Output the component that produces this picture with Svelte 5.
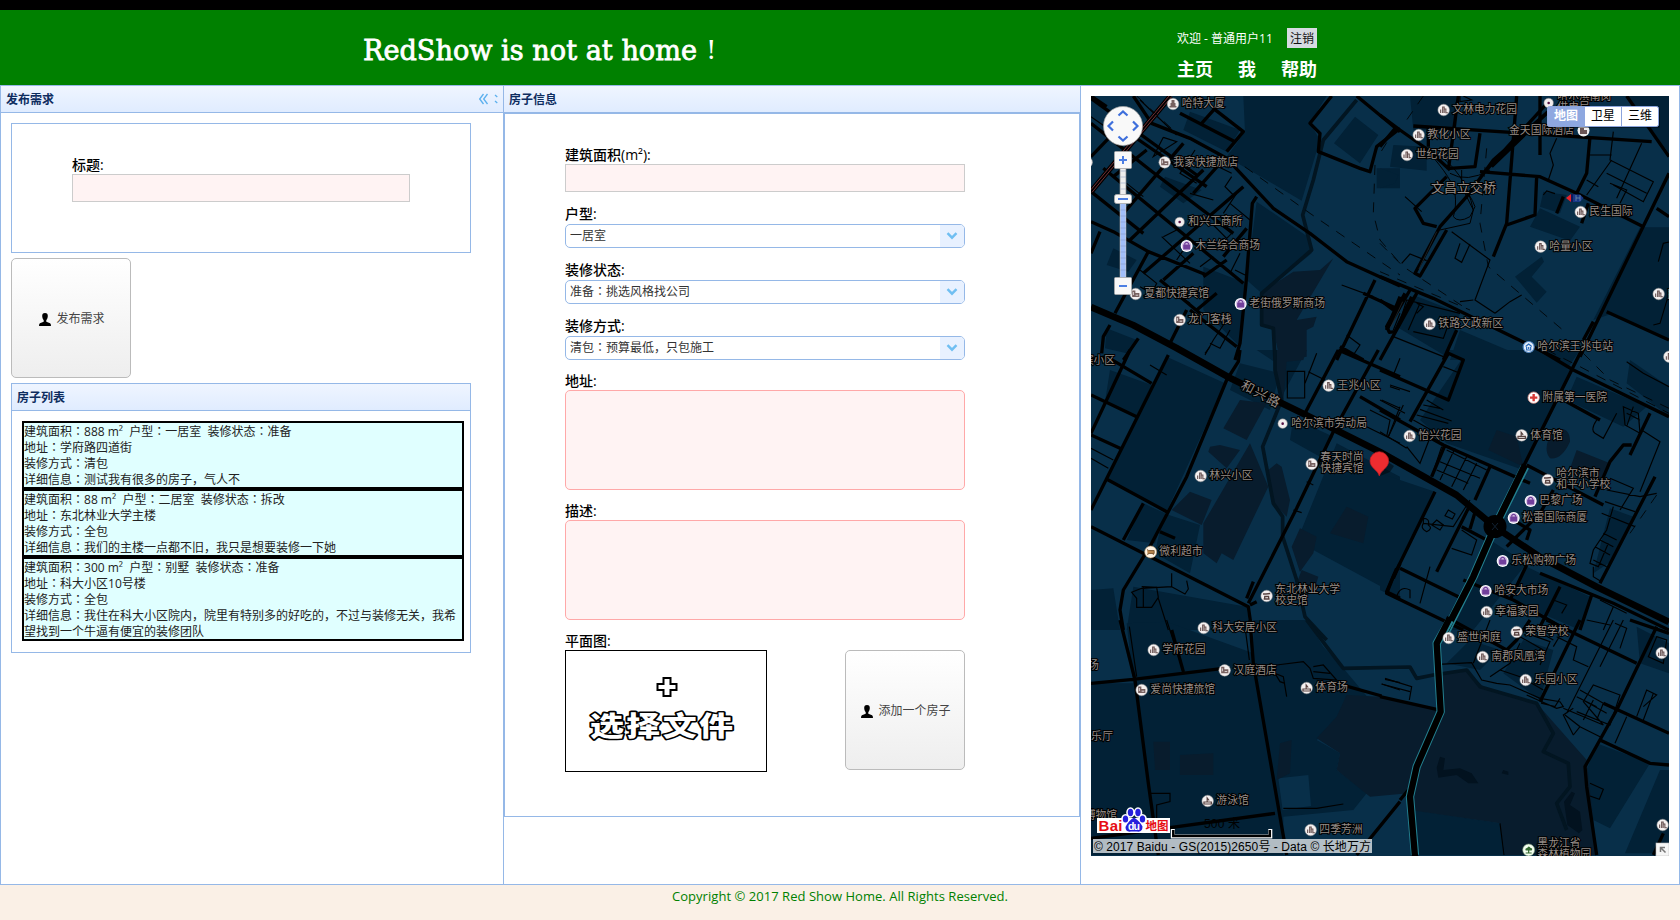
<script>
  const houses = [
    { area: '888', type: '一居室', state: '准备', address: '学府路四道街', way: '清包', detail: '测试我有很多的房子，气人不' },
    { area: '88', type: '二居室', state: '拆改', address: '东北林业大学主楼', way: '全包', detail: '我们的主楼一点都不旧，我只是想要装修一下她' },
    { area: '300', type: '别墅', state: '准备', address: '科大小区10号楼', way: '全包', detail: '我住在科大小区院内，院里有特别多的好吃的，不过与装修无关，我希望找到一个牛逼有便宜的装修团队' }
  ];
  const combos = [
    { label: '户型:', value: '一居室' },
    { label: '装修状态:', value: '准备：挑选风格找公司' },
    { label: '装修方式:', value: '清包：预算最低，只包施工' }
  ];
  const pieces = (s) => s.split(/(：)/).filter(Boolean);

  // Tile origins; geometry inside a tile is in thirds of a pixel.
  const tiles = {
    a: [1080, 80], b: [1380, 80], c: [1080, 350],
    d: [1380, 350], e: [1080, 620], f: [1380, 620]
  };
  const raw = [
    ['a', 279, 72, 'tower', '哈特大厦'], ['a', 254, 247, 'hotel', '我家快捷旅店'],
    ['a', 299, 426, 'dot', '和兴工商所'], ['a', 320, 498, 'bag', '木兰综合商场'],
    ['a', 167, 642, 'hotel', '夏都快捷宾馆'], ['a', 482, 672, 'bag', '老街俄罗斯商场'],
    ['a', 299, 720, 'hotel', '龙门客栈'], ['a', 20, 247, 'home', ''],
    ['b', 191, 90, 'home', '文林电力花园'], ['b', 116, 165, 'home', '教化小区'],
    ['b', 81, 225, 'home', '世纪花园'], ['b', 602, 396, 'home', '民生国际'],
    ['b', 482, 500, 'home', '哈量小区'], ['b', 149, 732, 'home', '铁路文政新区'],
    ['b', 446, 801, 'metro', '哈尔滨王兆屯站'], ['b', 836, 642, 'home', ''],
    ['b', 868, 830, 'home', ''], ['b', 506, 69, 'dot', '哈尔滨南岗', '供电局'],
    ['c', 746, 107, 'home', '王兆小区'], ['c', 608, 221, 'dot', '哈尔滨市劳动局'],
    ['c', 695, 342, 'hotel', '春天时尚', '快捷宾馆'], ['c', 362, 378, 'home', '林兴小区'],
    ['c', 212, 606, 'market', '微利超市'], ['c', 560, 738, 'school', '东北林业大学', '校史馆'],
    ['d', 461, 143, 'cross', '附属第一医院'], ['d', 89, 258, 'home', '怡兴花园'],
    ['d', 425, 256, 'sport', '体育馆'], ['d', 503, 390, 'school', '哈尔滨市', '和平小学校'],
    ['d', 452, 453, 'bag', '巴黎广场'], ['d', 401, 504, 'bag', '松雷国际商厦'],
    ['d', 368, 633, 'bag', '乐松购物广场'], ['d', 317, 723, 'bag', '哈安大市场'],
    ['d', 320, 786, 'home', '幸福家园'],
    ['e', 371, 24, 'home', '科大安居小区'], ['e', 221, 90, 'home', '学府花园'],
    ['e', 434, 151, 'hotel', '汉庭酒店'], ['e', 185, 210, 'hotel', '爱尚快捷旅馆'],
    ['e', 680, 204, 'sport', '体育场'], ['e', 383, 543, 'sport', '游泳馆'],
    ['e', 692, 630, 'home', '四季芳洲'],
    ['f', 206, 54, 'home', '盛世闲庭'], ['f', 410, 36, 'school', '荣智学校'],
    ['f', 308, 111, 'home', '南郡凤凰湾'], ['f', 437, 180, 'home', '乐园小区'],
    ['f', 845, 99, 'home', ''], ['f', 848, 615, 'home', ''],
    ['f', 446, 690, 'park', '黑龙江省', '森林植物园']
  ];
  const pois = raw.map(([t, x, y, icon, ...lines]) => ({
    x: tiles[t][0] + x / 3, y: tiles[t][1] + y / 3, icon, lines: lines.filter(Boolean)
  }));
  const at = (t) => `translate(${tiles[t][0]} ${tiles[t][1]}) scale(.33333)`;
</script>

{#snippet person()}
  <svg width="12" height="13" viewBox="0 0 12 13" fill="#000"><path d="M6 0C3.900 0 3.200 1.300 3.200 3c0 1.900.8 3.300 1.500 4.100V8.700L.9 10.200Q0 10.600 0 13H12q0-2.400-.9-2.800L7.300 8.700V7.100C8 6.300 8.800 4.900 8.800 3 8.800 1.300 8.100 0 6 0z" /></svg>
{/snippet}
{#snippet cn(s)}{#each pieces(s) as p}{#if p === '：'}<span class="mid-punct" lang="zh-Hant">{p}</span>{:else}{p}{/if}{/each}{/snippet}

<div class="page">
  <header>
    <svg class="brand" width="356" height="36" viewBox="0 0 356 36"><text x="0" y="29" textLength="334" lengthAdjust="spacingAndGlyphs">RedShow is not at home</text><text x="343" y="28" class="bang">!</text></svg>
    <div class="user">
      <div class="welcome"><span>欢迎 - 普通用户11</span><button class="logout">注销</button></div>
      <nav><b>主页</b><b>我</b><b>帮助</b></nav>
    </div>
  </header>

  <main>
    <section class="left">
      <div class="bar"><b>发布需求</b>
        <svg width="22" height="12" viewBox="0 0 22 12" fill="none" stroke="#5cb0ee" stroke-width="1.300"><path d="M4.500 1L.7 6l3.800 5M8.500 1L4.700 6l3.800 5" /><path d="M16 2l2.300 2M16 8l2.300 2" /></svg>
      </div>
      <div class="leftbody">
        <div class="titlebox">
          <div class="label">标题:</div>
          <div class="input"></div>
        </div>
        <button class="big">{@render person()}<span>发布需求</span></button>
        <div class="listpanel">
          <div class="bar"><b>房子列表</b></div>
          <div class="list">
            {#each houses as h}
              <div class="house">
                <div>{@render cn(`建筑面积：${h.area} m²\u00a0 户型：${h.type}\u00a0 装修状态：${h.state}`)}</div>
                <div>{@render cn(`地址：${h.address}`)}</div>
                <div>{@render cn(`装修方式：${h.way}`)}</div>
                <div>{@render cn(`详细信息：${h.detail}`)}</div>
              </div>
            {/each}
          </div>
        </div>
      </div>
    </section>

    <section class="mid">
      <div class="bar"><b>房子信息</b></div>
      <div class="form">
        <div class="label">建筑面积(m²):</div>
        <div class="input"></div>
        {#each combos as c}
          <div class="label gap combo-label">{c.label}</div>
          <div class="combo"><span>{@render cn(c.value)}</span><em><svg width="12" height="8" viewBox="0 0 12 8" fill="none" stroke="#70bff2" stroke-width="2.400"><path d="M1.500 1.200L6 5.700l4.500-4.500" /></svg></em></div>
        {/each}
        <div class="label gap last">地址:</div>
        <div class="area"></div>
        <div class="label gap area-label">描述:</div>
        <div class="area"></div>
        <div class="label gap area-label">平面图:</div>
        <div class="files">
          <div class="file">
            <svg width="200" height="120" viewBox="0 0 200 120">
              <path d="M97.500 27h7v6h6v6h-6v6h-7v-6h-6v-6h6z" fill="#fff" stroke="#000" stroke-width="2" />
              <g transform="translate(24 84.500) scale(1 .8)"><text x="0" y="0" textLength="143">选择文件</text></g>
            </svg>
          </div>
          <button class="big">{@render person()}<span>添加一个房子</span></button>
        </div>
      </div>
    </section>

    <section class="right">
      <svg class="map" width="578" height="760" viewBox="1091 96 578 760">
        <rect x="1091" y="96" width="578" height="760" fill="#082f49" />
        <!-- land blocks -->
        <g fill="#022136">
          <g transform={at('a')}>
            <path d="M330 95L480 150 440 215 310 150zM490 48H740L690 130 720 180 665 362 440 230 495 155zM255 290L365 330 310 370 240 320zM370 560L500 610 480 800 370 690zM530 365L690 475 695 520 545 640 500 600zM825 110L895 165 840 250 762 190zM100 505L170 540 145 575 80 555zM80 745L170 780 140 820 75 805zM890 265H960V325H890z" />
          </g>
          <g transform={at('b')}>
            <path d="M90 48H230V150H100zM0 265L55 285 45 310 0 325zM40 195L140 200V272L30 260zM480 385L600 440 570 482 450 440zM490 335L560 345 540 400 480 380zM485 530L405 590 470 668 500 635 455 590 492 545zM780 442H867V780L700 700 640 720zM100 645L240 700 200 830 50 740zM240 750L430 830 400 840H210zM740 48H867V220z" />
          </g>
          <g transform={at('c')}>
            <path d="M260 20L435 100 260 485 80 390zM530 0H680L600 150 590 40zM480 40L600 70 570 180 450 120zM640 205L760 260 720 320 630 270zM770 280L960 380V740L700 600 660 665 640 600zM250 490L360 525 330 670 225 610zM33 720L100 715 120 840H33zM160 710L500 770 510 840H140zM190 460L255 490 225 580 140 570zM90 60L215 105 170 200 75 155z" />
          </g>
          <g transform={at('d')}>
            <path d="M250 20L580 60 430 360 200 280 120 210zM190 0H600L560 60 260 30zM590 80L800 170 730 230 560 150zM0 370L165 425 30 700 20 730 0 720zM330 570L440 640 280 840H210L285 690zM440 650L630 740 600 840 390 750zM690 475L760 500 700 630 640 670zM750 30L867 110V200L740 100z" />
          </g>
          <g transform={at('e')}>
            <path d="M140 10L260 5 520 100 520 0H680L730 80 790 145 870 240 710 360 780 400 770 450 860 520 820 570 610 590V705H33V190H160zM550 140L730 110 800 230 710 360 770 450 590 475z" />
          </g>
          <g transform={at('f')}>
            <path d="M100 570L360 610 375 705H110zM650 370L810 430 690 625 640 600 620 450zM840 450H867V700H735zM430 60L520 90 480 240 370 160zM270 60L360 90 300 150 200 130zM770 20L867 70V160L780 130z" />
          </g>
        </g>
        <path transform={at('e')} d="M595 475L685 465 693 558 608 570z" fill="#082f49" />
        <g fill="#081c2d">
          <path transform={at('a')} d="M540 640L640 575 720 570 760 535 650 720 710 710 700 740 680 750V830L600 840 580 750 540 735z" />
          <path transform={at('c')} d="M480 150L560 160 500 270 430 235zM390 290L420 285 480 300 440 355 385 305zM510 280L565 410 460 630 425 610 410 640 370 610V520zM330 425L395 450 365 525 275 480zM590 340L605 350 630 450 620 500 580 460 565 360zM660 535L710 560 700 610 660 665 635 590zM590 0H680L670 30 620 35 610 150 585 60zM665 660L715 680 700 730 650 700zM800 470L865 500 850 580 750 550z" />
          <path transform={at('d')} d="M520 240Q570 225 570 275 545 330 510 325 485 295 520 240zM590 300L690 340 660 400 565 370zM350 240L410 260 430 350 325 300z" />
          <path transform={at('e')} d="M800 225L900 230 1075 272 1010 440 985 520 870 530 770 450 780 400 710 355 770 290zM300 405L400 400V465H300zM220 365H270V450H225zM600 370L635 360 630 460 590 480z" />
          <path transform={at('f')} d="M180 160L260 150 310 200 470 250 620 420 640 600 650 705H375L360 610 90 570 110 440 182 275z" />
        </g>
        <g fill="#02121f">
          <path transform={at('f')} d="M180 410l15 5-5 35 50-5 35 15 20 30-30 0-35-25-55 8-5-30zM370 450l15 5v10l-20-5zM575 515l10 5-15 35 30 20 7 55-10 10-35-25-10-70z" />
        </g>
        <!-- rivers -->
        <g fill="none" stroke="#021521" stroke-width="11" stroke-linejoin="round">
          <path transform={at('a')} d="M830 60L730 180 700 300 668 405 695 510 545 640V735L580 745 585 840" />
          <path transform={at('c')} d="M585 0V60L605 150 548 290 580 460 608 500V560L650 690 675 800 740 870" />
          <path transform={at('e')} d="M680 0L740 80 790 145 990 141 1010 175 1060 165 1160 150 1200 200 1370 250 1420 340 1390 395 1465 430 1470 500 1430 550 1460 630" />
        </g>
        <!-- minor streets -->
        <g class="thin">
          <path transform={at('a')} d="M250 172L220 230 290 185 250 172M345 210L300 280 350 310M455 290L435 320 460 345M450 370L510 420M470 340L430 400M420 430L455 460 440 475 400 435M245 470L330 550M330 480L290 540M360 560L400 530M180 570L230 610 215 640 180 620M270 630L330 670M440 720L400 780 375 825M390 790l30 15 30-55M465 570l30 15M785 615L880 650M800 765L840 795 820 825 780 805M940 750L960 700M180 60L290 165M33 110L90 150M140 310L190 350M330 340L400 360M480 520L450 580M250 470l40-20M415 260l40 20" />
          <path transform={at('b')} d="M250 48l25 12-35 5V48M530 175L510 220 520 255 505 300M700 155l-10 85 130 65-30 60-90-50M695 240L620 345M630 225H695M785 190L710 355M680 280L800 340M720 370L740 330 690 310M620 300L655 320M75 350L125 395M215 455L330 540 285 660 345 700M240 490l-15 45 20 12 25-55M65 550l25-28 50 20M55 740L80 660 240 700M85 750L120 670M110 670l20 10-20 20M40 770L190 830M100 755l90 20 20-55M835 545l15-55 17-4M820 735l20-5 27-90M280 660l-40 5M490 345l10-12 25 8M345 700l45-35 35-20" />
          <path transform={at('c')} d="M375 10l15-20M622 64h52v80h-52zM710 10L675 100M685 65L735 90M33 295L100 330M33 325L85 355M210 45l50 30M905 150l55 25M930 110l30 10M870 180l60 30-10 50M860 230l100 50M640 480l25 8M680 395l20 10M275 670v40l-90 5-30 12 15 18v27h45l20-30-5-30-45-2M190 712v60M275 710l40 22 10-15-5-25M235 745l30 95M960 170L925 260" />
          <path transform={at('d')} d="M60 25L40 75M190 50L240 70M0 150L75 190M30 105l60 20M100 210l90 50M110 195l95 25M120 178l95 35M130 165l50 10M140 150l50 30M70 165L25 260M80 290L120 340 155 250M0 245L80 295M185 290l-30 90M225 295L180 390M260 320L215 410M290 340L250 420M180 335l120 50M170 360L265 400M200 300l120 60M270 450L220 530 130 520M245 540l45 30-15 45-60-20M170 510l20 15-10 15-25-15zM205 480l20 12-8 15-22-10zM130 505q20 0 15 20 15 10-5 20-20-10-10-25zM50 740q10-35 40-20L90 745M150 650L120 760M650 210q-20 30-5 40l25 15 40-75M730 170l45 20 5 60-45-25zM740 190l40 20M760 170l-20 60M785 240l55 35-60 150M690 385l70 30-40 65M675 455l90 30M665 490l100 40M700 470l-20 70-40 60-10 40 25 10 30-70M645 590l45 25M660 570l40 20M670 550l40 20M640 630l40 20M640 650v30l20 12M540 710l-20 40 40 15-15 25M680 420L780 440 830 430M740 35L790 70 867 110M700 770L670 840M660 750L740 790" />
          <path transform={at('e')} d="M148 20L170 170M260 0l50 155M495 20L508 120M560 150L610 170 620 230M570 135L600 185 615 190M590 135L670 125 690 145 700 175 770 180 730 135 700 140M700 155L750 160M915 178l45 10M905 192L960 210M610 565l100 0 80-13M210 520H270V545L230 555V600" />
          <path transform={at('f')} d="M15 175L95 200 88 240M5 192L90 215M175 133L275 128 305 180 350 190 390 195 480 235 540 245 550 260 530 265 440 225M360 150l60 20 70 40M280 130L330 0M330 170L390 130 420 70M420 50L490 90M440 40l70 25-30 70M520 60L450 20M530 50l60 30-10 40 45 20M550 265l120 50-60-70 30-50 80 30-30 90-100-40M580 345l-30-60 30-20M590 230l60 30M600 210l70 40-20 50M600 320L660 350M620 0L690 15M705 10l35 15-20 60M660 140L730 0M550 30L520 80M790 260L830 225 800 210 770 290M820 220L790 300M630 490l40 18-12 30-28-10M740 290L705 370M360 610l12 95M830 50l30 10-10 70-45-20zM600 235l80 45M610 300l30-60M490 220l-5 30 40 10 15-25M555 285L600 320 580 345M700 0L560 280" />
        </g>
        <!-- streets -->
        <g class="street">
          <path transform={at('a')} d="M33 55L350 285M33 130L210 270 460 460M33 230L100 160M33 335L190 460M70 265L490 610M100 290L200 210M160 48L215 130 330 175 440 235 580 385 690 460 800 545 960 618M300 100L465 185M365 130L405 85M400 85L490 155 440 215M155 165L380 320M310 190L130 400M370 270L150 480M490 320L190 580M250 600L340 520M33 425L100 455 205 515 380 585M205 515L105 700M60 455L33 520M500 445L430 530M330 690L470 800M440 540L370 590M33 48L80 80M90 735L70 770 65 820M175 775L130 840M420 250L340 340M530 350L517 370 498 610 480 790 465 840M240 600L360 700M410 640L350 690M320 690L270 790M755 48L690 130 720 160 715 215 840 265 870 275 890 200 960 145M830 48L960 155M885 600L770 840M780 800L850 840M850 640L960 690M920 750L960 650" />
          <path transform={at('b')} d="M0 105L60 150 145 210 210 270M0 200L50 140M100 138L815 185M235 48L205 270M300 160L285 260 210 265M410 48L380 430 340 530M145 145L145 200M480 48V225M335 260L510 90M300 275L480 290 590 340 790 440M470 290L465 405 380 435M590 340L620 280 630 170M200 290L105 385 130 430 170 440M625 370L605 430M550 350L530 400M740 48L867 230M867 280L600 830M830 385L867 410M0 590L160 655 540 840M90 630L20 750M110 640L0 840M230 750L190 840M680 695L867 780M0 660L40 690M640 725L610 780" />
          <path transform={at('c')} d="M480 0L475 35 440 90 320 380 215 580 130 720 120 780 130 840M265 15L33 480M33 530L200 615 505 770 515 840M75 385L260 485M190 460L130 570M150 0L33 250M33 30L80 20 215 100M33 135L170 200M33 255L120 295M240 545L285 565M775 0L675 190M775 0L960 80M895 0L760 245 650 475 505 760M840 140L960 210M520 695L500 745M530 755L510 765M960 640L940 685M950 655L920 725 960 745" />
          <path transform={at('d')} d="M0 60L205 150 250 30 205 10 90 215M0 180L190 285 450 400M195 285L155 380M330 350L285 450M165 425L40 680 20 730 250 840M265 475L170 665M60 655L235 740M245 530L330 575M380 590L480 490 520 420M440 570L450 540 400 510M440 645L390 750M250 690L400 750 560 840M480 0L580 60 867 200M605 0L575 60 430 350M560 155L660 210M810 190L750 315M755 285L730 285 690 335 645 440M440 345L670 465M825 380L660 700M540 710L480 830M635 735L600 840M480 670L700 760 867 840M270 475l15 12-15 50" />
          <path transform={at('e')} d="M120 0L165 180 205 490 235 705M33 190L160 178 430 145M510 0L520 130 620 705M275 30L310 155M33 655L585 580M770 190L905 228M960 545L830 705" />
          <path transform={at('f')} d="M0 230L170 268M60 540L85 510M215 0L380 90 410 60 450 0M500 0L770 130M600 0L480 245M830 20L710 270 615 440 620 500 650 705M670 250L867 340M660 360L810 430 867 435M750 0L867 40M850 640L820 705" />
        </g>
        <!-- arterials -->
        <g fill="none" stroke="#000" stroke-linejoin="round">
          <path d="M1091 307L1133 325 1176.500 348 1230 378 1307 415.500 1380 452 1456.500 495 1495 527 1540 557 1597 587 1669 622" stroke-width="6.700" />
          <path transform={at('b')} d="M510 90L340 240 260 350 180 440 105 580 120 588 200 450M75 640L20 740 28 757 45 755 95 650M510 60L310 280" stroke-width="10" />
          <path transform={at('b')} d="M170 455L117 567M68 665L32 742" stroke="#2c3032" stroke-width="2" />
          <path transform={at('b')} d="M145 215Q220 300 225 340T220 410Q235 430 270 410L285 380Q270 340 245 320V270M210 280Q260 310 330 270M180 450Q225 440 270 430L280 390 245 320M160 215Q255 270 280 390" stroke-width="3" />
        </g>
        <g fill="none" stroke-linejoin="round">
          <path transform={at('d')} d="M435 350L345 530 280 680 195 850" stroke="#238090" stroke-width="26" />
          <path transform={at('d')} d="M435 345L345 530 280 680 190 855" stroke="#000" stroke-width="20" />
          <path transform={at('f')} d="M210 0L170 70 182 275 110 440 90 530 105 705" stroke="#238090" stroke-width="25" />
          <path transform={at('f')} d="M210-8L170 70 182 275 110 440 90 530 105 710" stroke="#000" stroke-width="19" />
        </g>
        <circle cx="1495" cy="526.500" r="11.500" /><path d="M1492 523l6 7m0-7l-6 7" stroke="#123" />
        <path transform={at('a')} d="M272 48L33 335" stroke="#000" stroke-width="17" />
        <path transform={at('a')} d="M267 48L33 329M275 50L36 337" stroke="#713036" stroke-width="3" />
        <g fill="none" stroke="#000" stroke-width="2.500" stroke-dasharray="30 26">
          <path transform={at('a')} d="M170 48L290 160 480 250 690 400 960 585" />
          <path transform={at('a')} d="M885 255L880 400 900 480 960 550" />
          <path transform={at('b')} d="M320 205L300 430 325 560 560 760M0 490L70 560 250 680M0 575L270 690M130 48L80 120M50 140L0 220" />
          <path transform={at('d')} d="M610 10L690 90 867 175M500 0L600 50 867 190M830 435L750 550" />
        </g>

        <!-- labels without a marker -->
        <g class="poi">
          <text x="1431" y="192" class="lg" textLength="65">文昌立交桥</text>
          <text x="1509" y="133.500" textLength="65">金天国际酒店</text>
          <text x="1083" y="364" textLength="32">滨小区</text>
          <text x="1088" y="669">场</text><text x="1091" y="740" textLength="22">乐厅</text><text x="1085" y="819" textLength="32">博物馆</text>
          <text class="lg" transform="translate(1240 388) rotate(28)" textLength="42">和兴路</text>
        </g>
        <g><circle cx="1583.500" cy="130.500" r="6" fill="#eee" /><path d="M1580 134v-6h4v2h3v4z" fill="#6b5656" /></g>
        <path d="M1566 198l5-4v8z" fill="#e6232c" /><path d="M1571 194h4v8h-4z" fill="#111b58" /><path d="M1573 194.500h7l3.500 3.500-3.500 4h-7z" fill="#193887" /><path d="M1576 195v6m4-6v6m-4-3h4" stroke="#79a" stroke-width=".7" />

        {#each pois as p}
          <g transform={`translate(${p.x} ${p.y})`}>
            {#if p.icon === 'dot'}
              <circle r="4.800" fill="#f2eeee" stroke="#777" stroke-width=".5" /><circle r="1.300" fill="#514" />
            {:else if p.icon === 'bag'}
              <circle r="6" fill="#fff" /><circle r="4.900" fill="#d8c5e8" /><path d="M-3.500-1.500h7v5h-7z" fill="#713f9b" /><path d="M-1.900-1.200v-1.500q1.900-2 3.800 0v1.500" fill="none" stroke="#713f9b" stroke-width="1.200" />
            {:else if p.icon === 'metro'}
              <circle r="5.500" fill="#e6effa" stroke="#5589c4" stroke-width="1.200" /><path d="M-3-.5L0-3l3 2.500M-2 0v3h4V0M0 0v2" fill="none" stroke="#286abb" stroke-width="1.200" />
            {:else if p.icon === 'cross'}
              <circle r="5.700" fill="#fff" stroke="#dc9087" stroke-width=".8" /><path d="M-1.200-3.700h2.400v2.500h2.500v2.400H1.200v2.500h-2.400V1.200h-2.500v-2.400h2.500z" fill="#d73a36" />
            {:else if p.icon === 'park'}
              <circle r="6" fill="#f4fff0" stroke="#7a9b78" stroke-width=".6" /><path d="M-3 .5Q-4-2-1.500-2 0-5 2-2q2.500 0 1 2.500zM-.6 0h1.200v2.500H3v1h-6v-1h2.400z" fill="#356b31" />
            {:else if p.icon === 'market'}
              <circle r="6" fill="#fff4e5" stroke="#bda074" stroke-width=".6" /><path d="M-3.500-2.500L-2-1.500H3.500V1.500H-2.500L-3 3M2 1.500L3 3" fill="#b5834c" stroke="#7d5730" stroke-width=".9" />
            {:else}
              <circle r="5.800" fill="#f4f0f0" stroke="#999" stroke-width=".5" />
              {#if p.icon === 'home'}<path d="M-3 3v-3.500M-1 3v-6h1.500v6M.5-1h1.700v3.700h2" fill="none" stroke="#66504f" stroke-width="1.100" />
              {:else if p.icon === 'hotel'}<path d="M-3.500 3v-6.500h3.200v2.500h4V3z" fill="#776160" /><path d="M-2.300-2v3M0 1.200h2.500" stroke="#f4f0f0" stroke-width=".8" />
              {:else if p.icon === 'tower'}<path d="M-3.500 3.500v-1.500h1V-1h1v-3h3v3h1v3h1v1.500z" fill="#776160" />
              {:else if p.icon === 'sport'}<path d="M-3.700 3v-2H3.700v2zM-.5 1v-4l2 2.500" fill="none" stroke="#584341" stroke-width="1.200" />
              {:else}<path d="M-3.700-2h3L3.500-2.500M-3 3h6M-2.500.5h5M-2 .5v2.500M2 .5v2.500" fill="none" stroke="#584341" stroke-width="1.300" />{/if}
            {/if}
            {#each p.lines as line, i}
              <text class="pt" x="8.700" y={p.lines.length === 1 ? 3.300 : -2.700 + i * 11}>{line}</text>
            {/each}
          </g>
        {/each}
        <text class="pt" x="1667" y="297.500">民</text>

        <!-- marker -->
        <path d="M1380 476l10-4 4-6-6-4z" opacity=".45" /><path d="M1379.300 476C1378 470 1370 468 1370 461a9.300 9.300 0 0 1 18.600 0C1388.600 468 1381 470 1379.300 476z" fill="#ee2c30" stroke="#bd1d22" stroke-width=".7" />

        <!-- pan and zoom control -->
        <circle cx="1123" cy="126" r="19.500" fill="#f9f9f9" stroke="#aaa" stroke-width=".7" />
        <path d="M1118.500 115.500l4.500-4 4.500 4M1118.500 136.500l4.500 4 4.500-4M1113 121.500l-4.500 4.500 4.500 4.500M1133 121.500l4.500 4.500-4.500 4.500" fill="none" stroke="#3e6fdc" stroke-width="2.200" />
        <rect x="1120" y="168" width="6" height="110" fill="#eee" stroke="#888" stroke-width=".7" /><rect x="1120.500" y="203" width="5" height="75" fill="#a2bffa" />
        <path d="M1120.500 171H1126M1120.500 177H1126M1120.500 183H1126M1120.500 189H1126M1120.500 210H1126M1120.500 216H1126M1120.500 222H1126M1120.500 228H1126M1120.500 234H1126M1120.500 240H1126M1120.500 246H1126M1120.500 252H1126M1120.500 258H1126M1120.500 264H1126M1120.500 270H1126" stroke="#8297bd" stroke-width=".5" />
        <g fill="#f8f8f8" stroke="#aaa" stroke-width=".8"><rect x="1114.500" y="151.500" width="17" height="17" rx="1" /><rect x="1114.500" y="194.500" width="17" height="9" rx="2" /><rect x="1114.500" y="277.500" width="17" height="17" rx="1" /></g>
        <path d="M1119 160h8m-4-4v8M1118 199h10M1119 286h8" stroke="#4d7fe3" stroke-width="2" />

        <!-- map type switch -->
        <rect x="1548" y="108" width="112" height="20" opacity=".4" rx="2" />
        <rect x="1547.500" y="106.500" width="111" height="20" rx="2" fill="#fff" stroke="#8ba4dc" /><path d="M1548 107h37v19h-37z" fill="#8ea8e0" /><path d="M1621.500 107v19" stroke="#8ba4dc" />
        <g class="types"><text x="1554" y="120" fill="#fff" font-weight="bold">地图</text><text x="1591" y="120">卫星</text><text x="1628" y="120">三维</text></g>

        <!-- scale, logo and attribution -->
        <path d="M1172.800 829v7.500h97.500V829" fill="none" stroke="#fff" stroke-width="4" /><path d="M1173.300 830v6h96.500v-6" fill="none" stroke="#000" stroke-width="2.500" />
        <text x="1204" y="828" font-family="Liberation Sans, Noto Sans CJK SC, sans-serif" font-size="12" textLength="36">500 米</text>
        <g class="logo">
          <path d="M1097 818h73v15h-73z" fill="#fff" />
          <g stroke="#fff" stroke-width="3" fill="#fff"><ellipse cx="1125.500" cy="819" rx="2.800" ry="3.600" /><ellipse cx="1130.500" cy="812.500" rx="2.800" ry="3.800" /><ellipse cx="1138" cy="812.500" rx="2.800" ry="3.800" /><ellipse cx="1142.500" cy="819" rx="2.800" ry="3.600" /></g>
          <text x="1098.500" y="831" textLength="24">Bai</text>
          <g fill="#2620dc"><ellipse cx="1125.500" cy="819" rx="2.700" ry="3.500" /><ellipse cx="1130.500" cy="812.500" rx="2.700" ry="3.700" /><ellipse cx="1138" cy="812.500" rx="2.700" ry="3.700" /><ellipse cx="1142.500" cy="819" rx="2.700" ry="3.500" /><path d="M1134 817.500q6 4 8.500 9 0 6-5.500 5h-6q-5.500 1-5.500-4.500 3-6.500 8.500-9.500z" /></g>
          <text class="du" x="1128" y="829.700" textLength="12">du</text>
          <text class="dt" x="1145.500" y="829.700" textLength="23">地图</text>
        </g>
        <rect x="1093" y="839" width="279" height="14" fill="#dfe3e7" opacity=".8" />
        <text class="attr" x="1094" y="850.500" textLength="277">© 2017 Baidu - GS(2015)2650号 - Data © 长地万方</text>
        <rect x="1656" y="843" width="13" height="13" fill="#f5f5f5" stroke="#bbb" stroke-width=".6" /><path d="M1660.500 852v-4.500h4.500M1661 848l4.500 4.500" fill="none" stroke="#777" stroke-width="1.500" />
      </svg>
    </section>
  </main>
  <footer>Copyright © 2017 Red Show Home. All Rights Reserved.</footer>
</div>

<style>
  :global(body) { margin: 0; overflow: hidden; }
  .page { width: 1680px; height: 920px; display: flex; flex-direction: column; background: #faf0e6; font: 12px/16px "Open Sans", "Noto Sans CJK SC", sans-serif; color: #000; }
  .page * { box-sizing: border-box; }
  button { font: inherit; margin: 0; padding: 0; }
  header { height: 85px; border-top: 10px solid #000; background: #008000; padding-left: 363px; display: flex; flex: none; color: #fff; }
  .brand { margin-top: 21px; font: 28px "DejaVu Serif", serif; fill: #fff; stroke: #fff; stroke-width: .8px; flex: none; overflow: visible; }
  .brand .bang { font-size: 26px; stroke-width: 0; }
  .user { margin-left: 458px; padding-top: 18px; }
  .welcome { display: flex; align-items: center; height: 20px; width: 140px; justify-content: space-between; white-space: nowrap; }
  .welcome span { padding-top: 2px; }
  .logout { width: 30px; height: 20px; border: 0; background: #d6dbe1; color: #111; line-height: 21px; }
  nav { display: flex; justify-content: space-between; width: 140px; font-size: 18px; line-height: 24px; margin-top: 9px; }
  main { display: grid; grid-template-columns: 503px 578px 599px; height: 800px; flex: none; border-top: 1px solid #95b8e7; border-bottom: 1px solid #95b8e7; background: #fff; }
  .bar { height: 27px; display: flex; align-items: center; justify-content: space-between; padding: 0 2px 0 5px; background: linear-gradient(#eff5ff, #e0ecff); border-bottom: 1px solid #95b8e7; color: #0e2d5f; font-size: 12px; }
  .bar b { padding-top: 2px; }
  .left { border-left: 1px solid #95b8e7; }
  .leftbody { padding: 10px 0 0 10px; width: 470px; }
  .titlebox { height: 130px; border: 1px solid #95b8e7; padding: 31px 60px 0; }
  .label { height: 19px; line-height: 19px; font-size: 14px; font-weight: 500; white-space: nowrap; }
  .combo-label { line-height: 18px; }
  .input { height: 28px; background: #fff3f3; border: 1px solid #ccc; }
  .big { width: 120px; height: 120px; border: 1px solid #bbb; border-radius: 5px; background: linear-gradient(#fff, #eee); display: flex; align-items: center; justify-content: center; gap: 5px; color: #444; padding: 2px 0 0 2px; }
  .leftbody > .big { margin: 5px 0; }
  .listpanel { border: 1px solid #95b8e7; height: 270px; }
  .list { padding: 10px 6px 0 10px; }
  .house { border: 2px solid #000; background: #e0ffff; color: #222; line-height: 16px; }
  .house div { position: relative; top: 1px; }
  .mid-punct { font-family: "Noto Sans CJK TC", sans-serif; line-height: 0; }
  .mid { border-left: 1px solid #95b8e7; border-right: 1px solid #95b8e7; }
  .form { border: 1px solid #95b8e7; height: 704px; padding: 31px 114px 0 60px; }
  .gap { margin-top: 13px; }
  .combo { height: 24px; border: 1px solid #95b8e7; border-radius: 5px; display: flex; overflow: hidden; line-height: 22px; padding-left: 4px; justify-content: space-between; color: #333; }
  .combo em { width: 24px; background: #e8f1ff; display: grid; place-items: center; }
  .last { margin-top: 11px; }
  .area { height: 100px; border: 1px solid #ffa8a8; border-radius: 5px; background: #fff3f3; }
  .area-label { margin-top: 11px; }
  .files { display: flex; justify-content: space-between; }
  .file { width: 202px; height: 122px; border: 1px solid #000; }
  .file svg { display: block; }
  .file text { font: 900 34px "Noto Sans CJK SC", sans-serif; fill: #fff; stroke: #000; stroke-width: 4px; paint-order: stroke; stroke-linejoin: round; }
  .right { padding: 10px; border-right: 1px solid #95b8e7; }
  .map { display: block; overflow: hidden; }
  .thin { fill: none; stroke: #000; stroke-width: 3.500; }
  .street { fill: none; stroke: #000; stroke-width: 10; stroke-linejoin: round; }
  .poi text, .pt { font: 10.800px "Noto Sans CJK SC", sans-serif; fill: #958c87; stroke: #000; stroke-width: 2px; paint-order: stroke; }
  .poi .lg { font-size: 13px; }
  .types { font: 12px "Noto Sans CJK SC", sans-serif; }
  .logo text { font: bold 15px "Liberation Sans", sans-serif; fill: #e60c13; }
  .logo .du { font-size: 10.500px; fill: #fff; }
  .logo .dt { font: bold 11.500px "Noto Sans CJK SC", sans-serif; }
  .attr { font: 12px "Liberation Sans", "Noto Sans CJK SC", sans-serif; }
  footer { text-align: center; color: #008000; font-size: 13px; line-height: 22px; letter-spacing: .04px; }
</style>
